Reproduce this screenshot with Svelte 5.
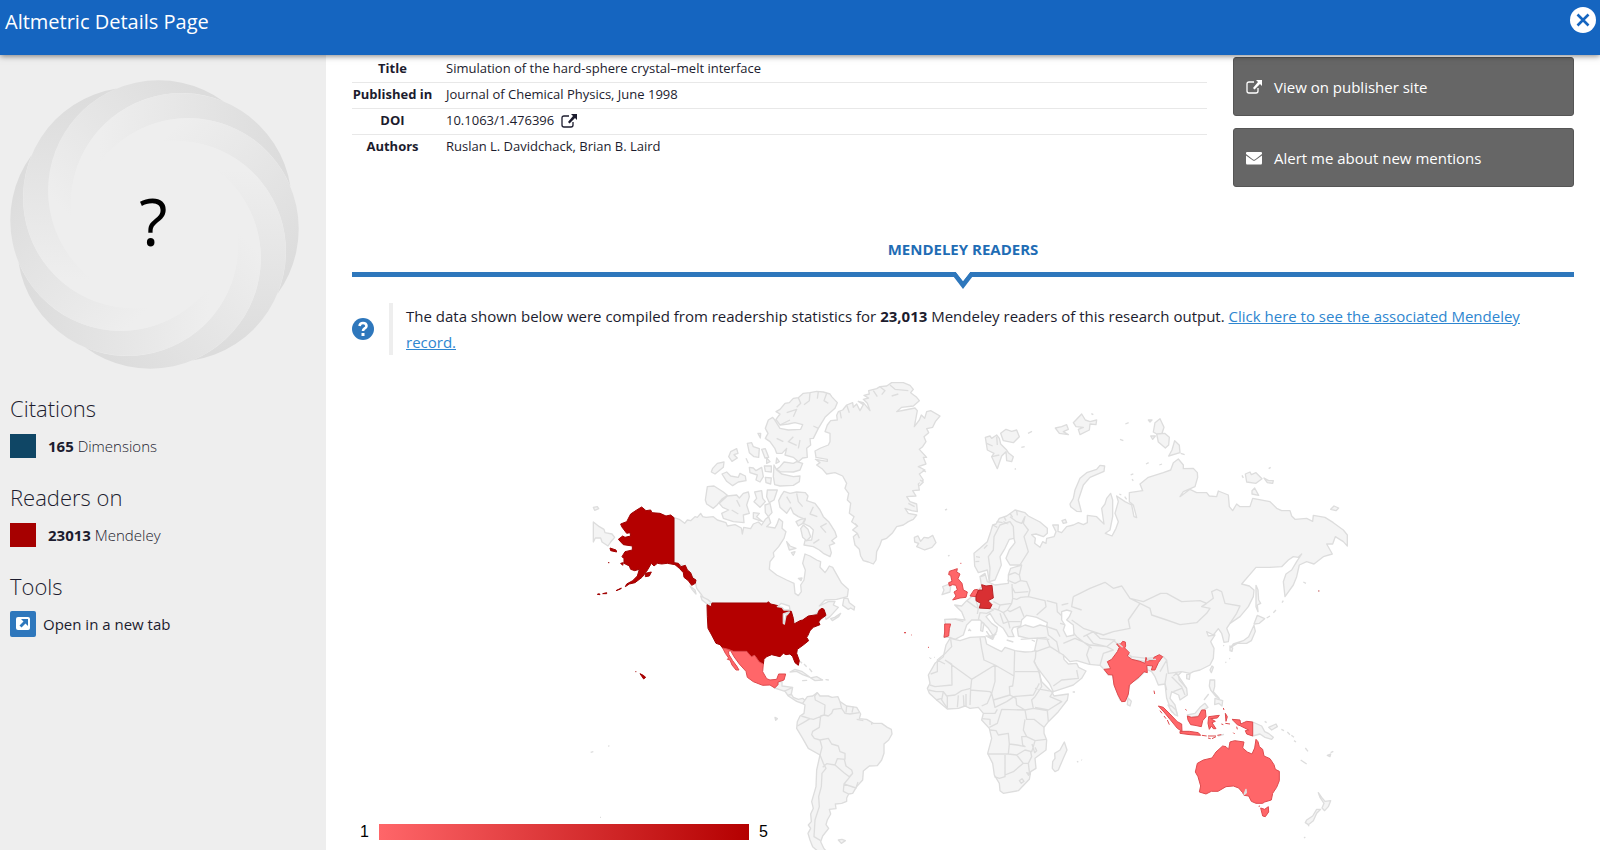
<script>
    const petals = [0, 45, 90, 135, 180, 225, 270, 315];

    const stats = [
        { heading: "Citations", count: "165", source: "Dimensions", color: "#0f4665" },
        { heading: "Readers on", count: "23013", source: "Mendeley", color: "#a60000" }
    ];

    // fills for the map: no readers, 1 reader, ... 5 readers
    const none = "#f4f4f4";
    const low = "#ff6669";
    const mid = "#d93033";
    const high = "#b40000";

    const outlines = {
        [none]: "#dddddd",
        [low]: "#dd4a4d",
        [mid]: "#b82326",
        [high]: "#a00000"
    };

    // every region has its own origin, three path units make one map unit
    const regions = [
        {
            origin: "580 370",
            shapes: [
                // canada
                [none, "M282 443L298 448 314 460 322 450 332 452 345 440 352 442 362 430 368 440 378 442 400 440 412 450 438 458 442 468 465 464 484 474 487 492 491 472 512 476 520 462 535 456 545 465 556 448 566 440 572 458 560 470 585 474 592 460 597 446 608 455 606 475 618 485 612 505 596 530 580 548 582 560 570 575 568 598 590 615 620 630 642 640 645 670 655 677 664 665 662 645 672 630 676 600 668 580 675 552 690 558 710 570 722 575 720 592 728 600 735 608 742 598 748 588 758 592 768 610 785 640 805 658 802 680 770 688 735 690 718 708 745 695 765 694 760 705 775 712 750 740 738 748 726 716 700 738 670 750 642 765 630 730 590 710 395 699 385 690 378 696 365 675 350 655 345 630 316 590 292 580 282 578Z"],
                [none, "M792 684L804 686 808 698 824 710 822 720 812 714 805 718 788 706ZM752 746L764 742 782 730 776 740 757 752Z"],
                // arctic islands
                [none, "M612 364L630 370 650 366 676 368 684 378 680 392 705 400 720 420 730 440 746 455 765 485 770 500 755 512 764 520 748 526 754 548 750 560 730 550 718 540 700 530 672 525 675 512 695 510 700 480 690 470 670 460 676 448 655 440 640 430 632 412 620 430 600 412 596 392 604 376Z"],
                [none, "M382 350L402 348 430 366 442 376 425 388 412 404 400 415 380 402 376 390ZM442 378L470 375 478 384 490 370 505 366 508 380 500 405 508 430 490 435 492 458 460 455 430 445 425 430 446 420 428 412 418 400Z"],
                [none, "M524 366L545 362 548 385 556 395 540 412 522 395 530 385ZM562 360L592 360 582 390 568 398 560 380ZM555 405L570 400 576 428 565 440 556 428ZM520 428L538 430 530 440 548 455 520 445Z"],
                [none, "M588 125L600 118 615 100 628 98 640 85 655 83 670 70 690 68 710 64 730 66 750 72 755 80 772 98 765 115 748 130 735 142 715 175 700 205 690 206 692 225 680 235 682 262 668 264 655 275 640 262 615 255 620 235 606 250 590 250 585 236 570 215 556 205 564 190 556 175 565 150 578 142 583 148 600 175 625 180 662 178 668 164 645 158 625 162 600 165 588 148 600 132Z"],
                [none, "M600 290L612 276 640 280 650 275 668 280 660 300 640 306 600 305 590 298ZM582 285L590 300 605 312 640 320 660 318 658 335 640 346 600 348 584 344 580 320Z"],
                [none, "M398 295L412 280 432 276 430 292 405 312 394 306ZM452 245L470 236 474 250 462 254 472 264 456 274 446 260ZM426 312L440 306 452 318 475 322 480 310 496 318 498 332 475 336 458 347 440 334ZM502 220L515 218 520 230 538 236 536 262 522 260 508 248ZM545 238L556 236 566 262 555 264ZM508 292L520 294 528 302 545 292 550 320 540 336 528 330 532 315 510 308ZM553 288L574 288 574 306 556 304ZM556 322L574 324 572 342 558 338ZM560 264L570 275 560 280ZM590 264L598 275 588 280ZM534 190L542 190 541 204ZM498 265L505 280"],
                [none, "M648 455L662 448 676 445 668 460 655 468ZM662 476L670 465 684 478 692 500 680 512 668 502ZM620 515L630 528 648 535 628 540ZM634 548L645 545 640 556ZM655 625L666 624 663 632Z"],
                // inlets of ellesmere and baffin
                [none, "M655 83L662 100 650 112M690 68L688 92 672 104M715 65L712 86M740 70L732 92 745 100M620 128L650 118 640 140M600 165L630 150M640 200L625 215 650 226M660 210L655 235M590 205L610 215M715 175L700 168M620 380L632 400M650 370L655 395 668 410M700 410L690 432 712 440M740 460L722 470 738 488M700 520L718 508M470 390L480 410M455 420L475 432"],
                // greenland
                [none, "M705 243L722 234 745 225 750 215 750 190 735 185 742 165 752 152 772 150 770 136 775 125 788 120 800 105 818 98 820 112 830 102 840 122 850 104 835 94 850 98 870 122 862 100 850 88 866 84 852 76 868 72 866 62 890 56 900 50 920 48 935 38 970 38 990 46 1000 58 992 68 1010 82 1018 92 1000 108 965 112 950 125 975 120 1005 114 1012 122 1003 170 1018 150 1024 135 1034 145 1040 125 1052 122 1080 138 1066 155 1058 172 1040 176 1046 188 1032 200 1038 215 1028 230 1018 238 1040 262 1030 262 1038 282 1015 290 1035 300 1018 312 1030 330 1015 342 1018 360 998 362 1008 378 980 380 990 395 1010 402 1012 425 995 422 975 415 985 430 1010 435 1000 448 985 455 970 465 950 470 938 488 920 505 905 510 900 525 890 545 888 570 880 582 865 576 850 572 842 558 838 538 825 525 820 500 832 490 818 480 832 468 815 455 822 440 808 430 812 400 802 390 806 370 795 355 800 340 788 318 765 308 740 312 728 298 710 285 720 278 706 268 742 274 742 268 708 262Z"],
                [none, "M900 50L915 62 905 74M880 62L892 80M930 45L945 58 985 62M935 78L955 72M800 105L808 128M780 124L784 145M1028 300L1038 306M1020 330L1030 336 1018 348M985 400L1004 410M832 490L838 505M825 460L834 470"],
                // iceland, chukotka and the rest
                [none, "M1003 502L1014 498 1022 514 1032 502 1045 504 1058 496 1068 518 1056 532 1034 540 1010 530 1016 520 1004 516Z"],
                [none, "M40 456L58 470 72 478 75 488 96 492 104 502 92 516 84 528 66 516 62 504 46 504 40 516ZM40 412L52 410 56 416 44 421ZM330 648L345 660 348 672 336 658ZM362 678L382 688 394 699 384 704 366 690Z"],
                [none, "M1095 420L1101 417M1104 556L1108 558"],
                // alaska
                [high, "M185 411L198 422 212 420 216 428 240 430 258 438 272 435 282 443 282 578 295 580 303 590 316 586 322 600 332 608 338 624 348 630 346 640 335 646 325 632 312 622 310 608 298 595 285 584 262 580 245 582 232 580 222 588 214 580 206 594 200 604 186 622 165 638 148 642 136 650 140 642 158 632 172 618 178 598 164 602 152 598 148 588 132 580 132 566 126 560 135 545 157 540 157 528 130 524 115 508 128 498 135 502 152 498 150 488 140 490 125 470 122 462 140 455 152 432 170 420ZM90 534L108 540 110 546 92 542ZM196 610L214 606 208 618 196 620ZM122 580L130 578 128 586ZM108 662L124 654 122 657ZM52 673L58 671 60 674ZM68 671L80 668 80 671ZM84 578H88"]
            ]
        },
        {
            origin: "580 590",
            shapes: [
                // central and south america
                [none, "M584 294L592 284 596 276 606 274 606 288 638 292 634 312 640 322 655 328 668 325 676 332 672 342 650 334 625 318 615 304ZM612 304L638 292M624 316L636 312"],
                [none, "M630 246L645 238 665 244 690 262 668 254 650 244ZM692 264L710 260 728 270 705 272ZM668 272L680 271ZM738 269L745 270ZM660 214L666 220M672 222L680 230M688 236L696 246"],
                [none, "M668 340L682 320 698 318 712 308 720 318 745 318 756 322 774 320 780 335 800 348 830 352 842 372 838 386 860 388 880 400 905 400 922 412 934 418 936 432 926 450 912 462 912 490 905 510 892 527 868 528 850 543 848 570 830 590 818 610 806 612 800 624 800 634 785 640 766 642 768 656 748 658 752 672 742 690 738 704 746 715 728 738 722 755 732 776 745 790 715 785 698 770 690 750 684 730 692 715 685 705 694 695 692 672 700 655 695 635 708 590 710 540 720 495 685 475 668 445 650 415 652 395 660 378 672 370 675 345Z"],
                [none, "M775 750L786 748 796 752 784 760ZM585 382L592 386 587 391ZM32 487L40 485M85 467L88 469M60 682H63"],
                // united states
                [high, "M381 44L393 50 396 39 562 39 565 35 572 42 590 46 608 50 620 60 634 64 640 85 642 102 660 92 668 90 685 78 712 74 718 60 726 55 732 58 738 76 722 88 716 96 720 104 700 112 690 122 684 136 680 142 686 152 670 165 652 178 650 190 658 212 655 226 645 218 638 200 630 192 618 194 610 190 600 200 575 194 560 200 552 208 550 222 538 216 524 196 514 200 500 184 460 184 428 174 420 164 408 160 395 135 384 115 382 80ZM180 251L190 256 197 262 191 267ZM166 245H169"],
                // mexico
                [low, "M428 174L445 178 460 184 500 184 514 200 524 196 538 216 550 222 548 245 560 266 570 270 590 268 596 252 617 252 612 270 594 276 594 284 584 294 570 285 548 286 520 275 502 262 498 244 478 222 462 200 452 182 445 184 447 194 458 212 470 228 477 240 468 240 456 225 450 210 442 208 446 204 436 190Z"],
                [low, "M973 128H978"]
            ],
            borders: "M712 308L704 318 706 330 735 345 733 375 722 378 718 412 698 424 695 434 703 445 720 450 745 445 755 462 775 468 780 485 795 490 795 508 772 506 765 525 740 521 728 532M720 450L726 472 720 495 730 520 738 535 726 550 724 590 716 620 718 650 705 690 702 740 722 752M793 508L798 528 815 540 818 550 808 560 792 548 765 525M818 550L792 582 790 604 806 612M792 582L828 594 834 576M733 375L745 378 755 370 760 358 785 355 780 335M785 355L795 370 810 372 838 368M800 348L798 368M820 350L816 368M664 378L690 386 700 388 733 375M652 408L670 398 690 386M830 388L850 392M875 396V404",
            lakes: "M610 72L628 66 622 74 618 76 613 102 610 100ZM592 50L604 40 628 48 630 60 612 60 606 52Z"
        },
        {
            origin: "900 390",
            shapes: [
                // europe and asia
                [none, "M222 490L240 475 262 455 272 425 278 405 288 402 298 385 320 378 345 360 375 368 385 378 420 396 442 415 442 430 430 440 408 432 395 434 406 445 404 460 420 472 428 455 438 460 440 445 462 440 468 425 458 405 475 405 474 424 485 428 500 410 520 405 535 398 550 404 562 398 562 376 590 380 612 402 605 355 615 342 620 325 632 310 638 330 638 380 630 420 616 430 636 438 648 415 655 395 645 370 655 335 650 318 675 335 695 345 702 380 710 383 700 345 688 335 688 308 728 302 720 282 745 262 790 248 812 240 820 218 835 207 850 225 850 236 880 235 892 248 893 262 885 290 850 305 840 320 870 298 890 308 920 308 928 318 950 320 955 303 985 315 988 350 998 362 1010 342 1020 350 1050 350 1058 325 1110 335 1130 355 1145 362 1170 362 1175 378 1185 388 1220 385 1238 394 1240 376 1275 382 1300 398 1330 420 1342 435 1342 468 1330 455 1306 440 1298 462 1280 462 1297 492 1270 500 1242 522 1220 515 1198 525 1190 560 1180 585 1155 620 1150 575 1158 552 1175 540 1190 515 1205 492 1195 502 1180 500 1165 510 1145 530 1110 532 1068 532 1025 582 1048 588 1062 600 1060 620 1045 650 1020 680 990 700 980 715 988 735 985 755 972 757 965 730 955 716 940 735 920 725 925 738 945 735 932 755 942 775 940 805 930 825 900 840 880 845 870 850 845 845 835 855 838 870 860 895 862 915 840 930 836 915 815 905 810 925 825 945 832 975 815 965 800 925 795 882 775 885 765 860 755 845 740 838 730 850 715 865 690 880 683 920 672 935 660 930 645 890 636 850 625 855 612 838 600 826 568 823 530 812 510 815 490 795 492 808 505 822 530 820 536 832 558 843 545 865 520 885 490 895 460 905 448 880 425 850 410 830 400 808 402 790 408 762 412 745 385 745 355 738 352 715 375 705 400 712 420 705 440 710 442 698 410 682 400 680 380 676 365 690 362 708 340 712 335 722 342 740 325 740 310 715 296 705 285 695 270 670 258 680 275 700 292 712 290 725 280 738 265 715 240 690 215 690 200 705 190 735 165 748 150 742 133 742 136 700 134 688 165 687 195 690 185 665 164 645 185 648 200 632 215 620 228 605 245 590 240 560 255 550 262 575 285 585 325 580 325 555 332 535 365 525 330 525 318 505 328 480 345 458 342 445 328 448 315 475 300 500 304 525 285 570 268 575 262 540 235 548 224 528Z"],
                [none, "M128 590L148 582 152 590 150 606 126 614 132 600ZM244 697L252 700 248 724 242 722ZM208 718L212 722ZM258 738L282 740 278 748ZM362 748L440 742"],
                // fjords
                [none, "M278 405L292 412M290 395L308 398M312 380L318 392M330 370L338 382M350 362L352 376M228 500L240 502M226 515L238 514M262 465L252 476"],
                // arctic islands
                [none, "M256 142L270 138 275 145 290 135 298 145 302 162 320 180 325 188 340 200 335 215 320 212 318 185 305 198 292 236 275 200 282 190 262 180ZM302 130L318 118 335 124 350 120 358 140 340 158 310 152ZM384 130L396 124M364 172L374 170M344 238L348 236M136 360L141 358M146 496L148 498"],
                [none, "M260 160L278 168M290 140L292 165M275 200L298 195"],
                [none, "M510 342L520 325 525 300 540 265 560 248 590 238 600 226 614 228 612 244 570 262 550 285 535 330 544 365 530 364 512 350Z"],
                [none, "M466 114L485 110 500 104 505 118 490 125 505 134 478 130ZM520 98L545 72 556 90 570 95 590 90 588 104 570 102 568 120 540 134 535 118 550 112 528 110ZM574 71L580 74M676 102L686 98M660 148L670 152M486 392L496 388 500 398 490 400ZM658 312L664 315M674 320L680 328M692 255L700 252"],
                [none, "M765 98L780 86 792 112 786 130 770 132 760 126ZM770 132L794 130 808 142 806 165 796 174 775 156ZM824 152L838 166 840 188 806 198 816 180ZM752 138L766 138 758 148ZM745 90L756 90 750 96ZM842 190L854 194M738 222L746 218M778 225L786 222M696 268L700 272"],
                [none, "M1036 252L1050 246 1054 254 1068 248 1086 266 1068 280 1040 276ZM1092 264L1106 272 1120 272 1118 280 1102 278ZM1056 302L1064 294 1076 316 1056 312ZM1026 256L1030 264M1106 236L1112 232M1292 358L1302 348 1316 354 1308 362Z"],
                // sakhalin and japan
                [none, "M1068 586L1074 600 1076 630 1082 640 1072 645 1074 665 1068 650ZM1072 676L1094 686 1078 700 1062 702ZM1062 706L1066 724 1054 752 1040 760 1012 760 992 772 1000 762 1030 752 1046 740ZM990 768L998 774 996 784 990 782ZM1100 684L1110 678M1120 668L1128 660M1210 576L1218 580M1146 638L1150 632"],
                [none, "M936 828L940 832 934 848 930 840ZM860 854L870 852 868 868 860 866ZM684 924L694 934 690 948 682 944ZM930 870L944 870 944 890 940 905 958 925 948 920 932 900 928 888ZM945 925L968 932 966 948 956 940 944 944ZM912 930L926 912"]
            ],
            borders: "M242 560L256 555M268 575L270 535 265 500 280 480 282 440 300 405 330 395 340 410 342 445M330 380L350 395 365 400 375 380 370 400 385 420 372 440 385 485 360 525M310 395L325 402M365 525L358 555 362 572 380 575 390 600 385 620 435 632 438 650 410 675M325 555L345 548 358 555M322 570L345 580 362 572M336 582L338 625 335 640 300 645 280 635M335 590L345 608 385 605M338 625L350 628 362 622 385 620M335 640L322 660 330 665 360 650 372 680M300 645L295 660 310 668 322 660M280 655L295 660M235 655L270 655 280 660 260 670 240 668 235 690M200 632L225 650 235 655 232 672M225 620L235 655M165 687L190 695M310 668L325 695 362 695M300 670L310 700 325 695 330 715M440 632L470 640 472 665 510 700M440 710L470 720 480 740M485 645L505 640M520 620L540 610 570 595 615 577 640 595 665 588 690 625 720 640M520 620L515 650 545 660M690 625L730 635 782 610 800 610 845 635 900 632 920 640 940 625 935 605 950 598 965 605 975 640 1020 648 1010 670 990 700M720 640L750 655 755 675 800 690 840 704 890 698 920 670 930 655 905 650 920 640M720 640L685 690 690 715 640 725 610 735 580 725 550 740M515 690L550 715 580 725 600 745 645 750 620 770 580 760 560 735M480 700L500 705 530 740 575 775M490 760L525 745 570 765 560 795 570 823M570 765L620 770 640 780 610 790 600 826M440 705L445 735 470 755 478 790M440 745L450 770 490 795M412 745L448 748M408 785L450 770M460 888L485 870 535 865 530 840M640 750L660 770 680 790 695 800 740 805 790 800 800 810 780 845M690 795L695 808 735 814M800 810L805 850 845 845M800 850L795 880 800 900M815 860L845 890 855 915M820 858L830 850 860 895M820 905L845 895M740 812L742 838",
            lakes: "M485 665L500 660 515 664 508 680 500 690 520 705 522 735 500 740 490 720 495 705 485 690Z"
        },
        {
            origin: "910 620",
            shapes: [
                // africa
                [none, "M120 55L150 62 180 52 225 50 230 72 255 85 275 95 285 82 315 92 345 96 365 95 378 92 376 115 372 125 385 150 395 185 425 215 432 228 475 222 472 240 445 275 415 305 402 322 402 340 410 360 408 390 375 415 378 445 362 455 358 478 325 512 280 520 270 512 268 490 253 465 248 430 233 400 245 355 238 325 215 300 220 280 205 262 180 265 165 258 145 265 112 267 80 240 58 220 52 205 60 190 55 165 75 130 100 110 108 75Z"],
                [none, "M463 366L471 390 462 410 445 450 435 455 427 445 428 425 435 415 434 400 450 390ZM230 35L240 50 258 42 244 55ZM290 60L310 66M365 60L375 64M58 113H60M72 112H74M488 216H495M501 424L505 427M514 419L516 421M174 32L180 30M60 115H64"]
            ],
            borders: "M122 58L125 80 108 98 82 120 105 132M82 120L82 155 62 162M105 120L125 132 126 195 75 200 60 195M105 120L185 178 255 135M210 52L215 85 222 120 255 135 312 168 314 92M315 155H388M312 168L308 198 298 200 300 225 250 240 245 220 255 185 255 135M185 178L182 205 155 212 135 225 110 228 100 215 78 215 56 210M180 210L240 215 245 220 232 250 215 258M182 205L180 255M168 222L168 260M145 226L142 262M160 226L162 258M112 230L112 265M100 215L95 240 112 265M78 240L95 235M250 240L255 262 290 245 312 230M300 225L318 235 320 255 345 270 370 265 365 240 375 230 395 200 388 155M310 230L370 225 388 190M375 205L430 215 420 230 455 245 415 270 375 262M370 265L412 272 415 305M345 270L350 298 372 298 402 322M345 270L275 268 262 310 238 322M220 280L255 280 262 268M216 296L240 298 240 315M345 298L340 330 350 350 375 362 408 358M350 350L335 350 338 375 345 380 322 375 298 372 295 340 265 345 258 332 240 330M298 372L295 402 233 402M295 402L320 405 345 390 365 395 370 380 375 362M375 382L380 392 374 398 366 372M320 405L340 430 355 430 365 410 362 395M285 405L285 470 268 475 253 470M285 465L310 455 340 430M355 430L358 455 360 465M328 482L336 476 342 484 334 490ZM350 458L358 460 356 466Z"
        },
        {
            origin: "1090 620",
            shapes: [
                // south-east asia and the pacific
                [none, "M234 255L245 258 258 270 263 288 254 284 242 270ZM292 285L315 280 330 262 345 250 354 262 340 270 325 288 300 292ZM488 306L515 318 524 335 535 340 550 352 545 358 525 352 510 342 488 348ZM536 322L558 312 562 320 545 330ZM384 348L402 343"],
                [none, "M685 518L695 532 705 544 722 542 715 560 704 572 696 564 702 550 690 532ZM692 568L680 580 670 602 655 614 646 608 650 600 668 588 680 568ZM654 616L658 618M642 654L646 651M574 328L582 332M592 336L600 344M604 346L612 352M612 362L618 366M646 384L654 394M632 420L650 432M712 406L722 402 720 410ZM722 398L730 394M524 304L530 308M418 115L420 117M406 126L409 128M400 76L402 78"],
                [low, "M80 72L92 72 98 64 106 66 107 78 104 84 118 98 112 108 125 118 150 124 165 130 168 112 172 122 188 122 192 112 208 104 218 110 205 128 195 150 184 150 188 138 170 136 172 158 162 155 148 170 118 195 115 222 106 244 95 245 84 225 72 195 68 165 55 164 42 148 62 146 52 125 65 118 82 95 88 82ZM192 212L194 222"],
                [low, "M205 258L220 262 240 282 262 305 275 312 276 334 262 325 240 298 222 276ZM270 334L298 334 325 338 332 346 300 344 270 340ZM292 288L304 292 325 290 335 270 346 270 348 290 338 302 334 320 315 316 302 314 294 300ZM356 290L388 286 382 294 362 296 376 304 366 308 378 326 370 326 364 318 358 328 354 310ZM426 298L450 300 452 312 470 304 488 306 488 348 470 342 466 332 476 330 452 318 442 314ZM406 280L412 290 408 304ZM336 346L350 348M354 348L378 348M382 346L394 344M354 354L362 356M366 356L378 350M400 264L402 270M286 268L290 271M394 312L400 314M406 310L420 312M430 338L434 342M440 320L442 328M210 272L216 280M222 288L228 296M232 300L238 314"],
                [low, "M498 358L504 365 508 380 518 388 522 408 540 416 552 434 556 448 568 454 568 482 560 502 548 520 544 540 524 546 518 550 498 550 484 544 476 528 462 526 458 518 446 504 430 498 408 500 384 514 364 514 348 522 328 516 332 498 324 470 316 456 322 430 340 420 366 414 378 396 398 378 408 380 416 388 420 366 434 362 462 366 458 384 472 396 486 402 494 384ZM512 564L524 568 535 560 536 576 526 590 518 588ZM506 559L510 558"]
            ],
            borders: "M84 70L98 82M170 122L178 118 198 118",
            lakes: "M462 524L468 508 469 518Z"
        },
        {
            origin: "900 390",
            shapes: [
                [low, "M160 540L172 536 170 546 180 552 174 566 186 580 190 600 202 606 198 622 180 624 158 630 168 618 162 606 172 600 168 586 158 584 148 588 146 578 156 574 152 556 146 554 148 544ZM181 520H184M134 702L152 702 148 716 146 738 132 742 134 726ZM12 728H18M33 735H35M84 772H87"],
                [low, "M210 618L222 600 232 598 236 610 228 620Z"],
                [mid, "M245 584L258 588 276 586 280 624 264 632 276 644 270 656 238 654 242 640 228 632 228 618 236 600 248 600Z"],
                [high, "M1255 603H1258"]
            ]
        }
    ];
</script>

<div class="page">
    <header>
        <h1>Altmetric Details Page</h1>
        <button class="close" aria-label="Close">
            <svg viewBox="0 0 26 26" width="26" height="26">
                <circle cx="13" cy="13" r="13" fill="#fff" />
                <path d="M7.500 7.500L18.500 18.500M18.500 7.500L7.500 18.500" stroke="#1565c0" stroke-width="2.600" />
            </svg>
        </button>
    </header>

    <div class="body">
        <aside>
            <svg class="donut" viewBox="-433 -433 866 866" role="img" aria-label="Altmetric score unknown">
                <defs>
                    <linearGradient id="petal" gradientUnits="userSpaceOnUse" x1="-90" y1="-160" x2="330" y2="192">
                        <stop offset="0" stop-color="#eeeeee" />
                        <stop offset="1" stop-color="#dcdcdc" />
                    </linearGradient>
                </defs>
                {#each petals as angle}
                    <path transform="rotate({angle - 83})" fill="url(#petal)" d="M390.8 161.9A331 331 0 1 0-216.6-89.7A331 331 0 0 1 390.8 161.9Z" />
                {/each}
                <text x="-4" y="63" text-anchor="middle">?</text>
            </svg>

            {#each stats as stat}
                <h2>{stat.heading}</h2>
                <div class="stat">
                    <span class="swatch" style="background-color: {stat.color}"></span>
                    <span><strong>{stat.count}</strong> {stat.source}</span>
                </div>
            {/each}

            <h2>Tools</h2>
            <a class="tool" href="#newtab">
                <svg viewBox="0 0 26 26" width="26" height="26">
                    <rect width="26" height="26" rx="2" fill="#2e77bc" />
                    <rect x="6" y="6" width="14" height="13" rx="2" fill="#fff" />
                    <path d="M11 8H18V15L15.500 12.500 11.500 16.500 9.500 14.500 13.500 10.500Z" fill="#2e77bc" />
                </svg>
                Open in a new tab
            </a>
        </aside>

        <main>
            <div class="summary">
                <table>
                    <tbody>
                        <tr><th scope="row">Title</th><td>Simulation of the hard-sphere crystal–melt interface</td></tr>
                        <tr><th scope="row">Published in</th><td>Journal of Chemical Physics, June 1998</td></tr>
                        <tr>
                            <th scope="row">DOI</th>
                            <td>
                                <a class="doi" href="#doi">10.1063/1.476396
                                    <svg viewBox="0 0 16 14" width="16" height="14">
                                        <path d="M8 2H3Q1 2 1 4V11Q1 13 3 13H10Q12 13 12 11V8" fill="none" stroke="currentColor" stroke-width="1.300" />
                                        <path d="M10 0H16V6L14 4 8.500 9.500 7 8 12 2Z" fill="currentColor" />
                                    </svg>
                                </a>
                            </td>
                        </tr>
                        <tr><th scope="row">Authors</th><td>Ruslan L. Davidchack, Brian B. Laird</td></tr>
                    </tbody>
                </table>

                <div class="actions">
                    <a href="#publisher">
                        <svg viewBox="0 0 16 14" width="16" height="14">
                            <path d="M8 2H3Q1 2 1 4V11Q1 13 3 13H10Q12 13 12 11V8" fill="none" stroke="currentColor" stroke-width="1.300" />
                            <path d="M10 0H16V6L14 4 8.500 9.500 7 8 12 2Z" fill="currentColor" />
                        </svg>
                        View on publisher site
                    </a>
                    <a href="#alert">
                        <svg viewBox="0 0 16 14" width="16" height="14">
                            <path d="M1 1H15Q16 1 16 2V3L9 8.500Q8 9 7 8.500L0 3V2Q0 1 1 1Z" fill="currentColor" />
                            <path d="M0 4.500L7 9.500Q8 10 9 9.500L16 4.500V12Q16 13.500 15 13.500H1Q0 13.500 0 12Z" fill="currentColor" />
                        </svg>
                        Alert me about new mentions
                    </a>
                </div>
            </div>

            <nav>
                <a href="#mendeley">Mendeley readers</a>
                <svg viewBox="0 0 26 17" width="26" height="17">
                    <path d="M0 0H26L13 17Z" transform="translate(0 -5)" fill="#fff" />
                    <path d="M0 0H6L13 9 20 0H26L13 17Z" fill="#2e77bc" />
                    <path d="M6 0H20L13 9Z" fill="#fff" />
                </svg>
            </nav>

            <div class="note">
                <svg viewBox="0 0 22 22" width="22" height="22">
                    <circle cx="11" cy="11" r="11" fill="#2e77bc" />
                    <path d="M7.500 8Q8 5 11 5Q14.500 5 14.500 8Q14.500 9.500 12.500 10.500Q11 11.500 11 13" fill="none" stroke="#fff" stroke-width="2.600" />
                    <rect x="9.500" y="15" width="3" height="3" fill="#fff" />
                </svg>
                <p>
                    The data shown below were compiled from readership statistics for <strong>23,013</strong> Mendeley readers of this research output.
                    <a href="#record">Click here to see the associated Mendeley record.</a>
                </p>
            </div>

            <div class="map">
                <svg viewBox="352 367 1222 520" role="img" aria-label="Readers by country">
                    {#each regions as region}
                        <g transform="translate({region.origin}) scale(0.33333)">
                            {#each region.shapes as [fill, d]}
                                <path {d} {fill} class:reached={fill != none} stroke={outlines[fill]} />
                            {/each}
                            {#if region.borders}
                                <path d={region.borders} fill="none" stroke="#dddddd" />
                            {/if}
                            {#if region.lakes}
                                <path d={region.lakes} fill="#fff" stroke="#dddddd" />
                            {/if}
                        </g>
                    {/each}
                </svg>
                <div class="legend">
                    <span>1</span>
                    <div class="scale"></div>
                    <span>5</span>
                </div>
            </div>
        </main>
    </div>
</div>

<style>
    :global(body) {
        margin: 0;
    }

    .page {
        height: 100vh;
        display: flex;
        flex-direction: column;
        overflow: hidden;
        font-family: "Open Sans", "Noto Sans", sans-serif;
        color: #1c1c2e;
        background-color: #fff;
    }

    a {
        color: inherit;
        text-decoration: none;
    }

    header {
        position: relative;
        z-index: 1;
        display: flex;
        flex-shrink: 0;
        justify-content: space-between;
        align-items: flex-start;
        box-sizing: border-box;
        height: 55px;
        padding: 7px 4px 0 5px;
        background-color: #1565c0;
        box-shadow: 0 1px 6px rgba(0, 0, 0, 0.5);
    }

    h1 {
        margin: 0;
        font-size: 20px;
        line-height: 30px;
        font-weight: 400;
        color: #fff;
    }

    .close {
        padding: 0;
        border: none;
        background: none;
        cursor: pointer;
    }

    svg {
        display: block;
        flex-shrink: 0;
    }

    .body {
        display: flex;
        flex: 1;
        min-height: 0;
    }

    aside {
        box-sizing: border-box;
        flex: 0 0 326px;
        padding: 25px 10px;
        background-color: #eeeeee;
    }

    .donut {
        width: 289px;
        height: 289px;
        margin-bottom: 23px;
    }

    .donut text {
        font-size: 198px;
        fill: #000;
    }

    h2 {
        margin: 0;
        font-size: 22px;
        line-height: 32px;
        font-weight: 300;
    }

    .stat {
        display: flex;
        align-items: center;
        gap: 12px;
        height: 26px;
        margin: 9px 0 22px;
        font-size: 15px;
        font-weight: 300;
    }

    .swatch {
        width: 26px;
        height: 24px;
    }

    strong {
        font-weight: 700;
    }

    .tool {
        display: flex;
        align-items: center;
        gap: 7px;
        margin-top: 9px;
        font-size: 15px;
    }

    main {
        flex: 1;
        min-width: 0;
        padding: 0 26px;
        overflow-y: auto;
        scrollbar-width: none;
    }

    .summary {
        display: flex;
        align-items: flex-start;
        gap: 26px;
        padding-top: 2px;
    }

    table {
        flex: 1;
        border-collapse: collapse;
        font-size: 13px;
        line-height: 17px;
    }

    tr + tr {
        border-top: 1px solid #e8e8e8;
    }

    th {
        width: 81px;
        padding: 3px 0 5px;
        font-weight: 700;
        white-space: nowrap;
    }

    td {
        padding: 3px 0 5px 13px;
    }

    .doi {
        display: flex;
        align-items: center;
        gap: 7px;
    }

    .actions {
        flex: 0 0 341px;
        display: flex;
        flex-direction: column;
        gap: 12px;
    }

    .actions a {
        display: flex;
        align-items: center;
        gap: 12px;
        box-sizing: border-box;
        height: 59px;
        padding: 0 12px;
        border: 1px solid #555;
        border-radius: 3px;
        background-color: #666;
        color: #fff;
        font-size: 15px;
    }

    nav {
        position: relative;
        display: flex;
        justify-content: center;
        margin-top: 48px;
        padding-bottom: 9px;
        border-bottom: 5px solid #2e77bc;
    }

    nav a {
        font-size: 15px;
        line-height: 28px;
        font-weight: 700;
        text-transform: uppercase;
        color: #1f6db5;
    }

    /* arrow hanging from the active tab */
    nav svg {
        position: absolute;
        top: 100%;
        left: 50%;
        margin-left: -13px;
    }

    .note {
        display: flex;
        align-items: center;
        gap: 15px;
        margin-top: 26px;
    }

    .note p {
        margin: 0;
        padding: 0 13px;
        border-left: 4px solid #eeeeee;
        font-size: 15px;
        line-height: 26px;
    }

    .note a {
        color: #2e86d0;
        text-decoration: underline;
    }

    .map {
        position: relative;
        margin-top: 12px;
    }

    .map > svg {
        width: 100%;
    }

    .map path {
        stroke-width: 4;
        stroke-linejoin: round;
    }

    .map path.reached {
        stroke-width: 3;
    }

    .legend {
        position: absolute;
        top: 456px;
        left: 8px;
        display: flex;
        align-items: center;
        gap: 10px;
        font-family: "Liberation Sans", Arial, sans-serif;
        font-size: 16px;
        line-height: 18px;
        color: #000;
    }

    .scale {
        width: 370px;
        height: 16px;
        background: linear-gradient(to right, #ff6669, #b40000);
    }
</style>
